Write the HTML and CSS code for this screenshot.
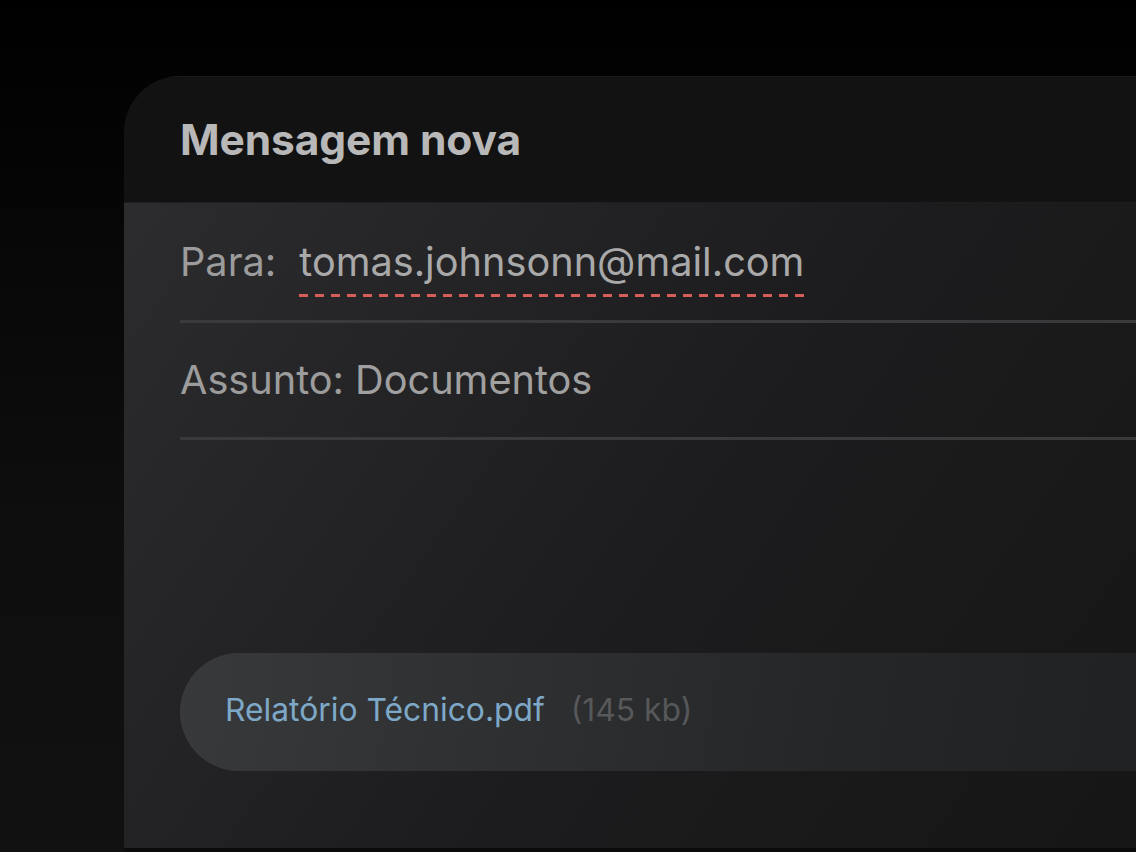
FILE: index.html
```html
<!DOCTYPE html>
<html lang="pt">
<head>
<meta charset="utf-8">
<title>Mensagem nova</title>
<link rel="stylesheet" href="styles.css">
</head>
<body>
<main class="stage">
  <section class="card">
    <header class="card-header">
      <h1 class="title">Mensagem nova</h1>
    </header>
    <div class="card-body">
      <div class="field field-to">
        <span class="label">Para:</span>
        <span class="value misspelled">tomas.johnsonn@mail.com</span>
      </div>
      <div class="field field-subject">
        <span class="label">Assunto:</span>
        <span class="value">Documentos</span>
      </div>
      <div class="spacer"></div>
      <div class="attachment">
        <span class="file-name">Relatório Técnico.pdf</span>
        <span class="file-size">(145 kb)</span>
      </div>
    </div>
  </section>
</main>
</body>
</html>
```
FILE: styles.css
```css
html, body {
  margin: 0;
  padding: 0;
  width: 1136px;
  height: 852px;
  overflow: hidden;
}
body {
  background: linear-gradient(180deg, #000 0%, #050505 20%, #0e0e0e 60%, #111 100%);
  font-family: Inter, "Noto Sans", sans-serif;
}
.stage {
  padding-top: 76px;
  padding-left: 124px;
  height: 852px;
  box-sizing: border-box;
}
.card {
  width: 1012px;
  height: 772px;
  border-top-left-radius: 56px;
  overflow: hidden;
  display: flex;
  flex-direction: column;
  box-shadow: 0 4px 0 #0b0b0b;
}
.card-header {
  height: 126px;
  flex: none;
  background: #121212;
  border-top: 1px solid #1a1a1a;
  box-sizing: border-box;
  display: flex;
  align-items: center;
  padding-left: 56px;
}
.title {
  margin: 0;
  font-size: 42.5px;
  font-weight: 700;
  color: #b8b8b8;
  letter-spacing: -0.1px;
  padding-bottom: 1px;
}
.card-body {
  flex: 1;
  background: linear-gradient(125deg, #2c2c2e 0%, #232325 30%, #1c1c1e 55%, #161616 100%);
  border-top: 1px solid #1e1e1e;
  padding-left: 56px;
  display: flex;
  flex-direction: column;
}
.field {
  display: flex;
  align-items: baseline;
  font-size: 39.7px;
  color: #9c9c9c;
  border-bottom: 3px solid #3a3a3c;
  box-sizing: border-box;
}
.field-to {
  height: 120px;
  padding-top: 35px;
  gap: 23px;
}
.field-subject {
  height: 117px;
  padding-top: 33px;
  gap: 11px;
}
.value {
  color: #a9a9a9;
}
.field-subject .value {
  color: #a0a0a0;
}
.misspelled {
  padding-bottom: 11px;
  background-image: repeating-linear-gradient(90deg, #d65e59 0 9px, transparent 9px 16px);
  background-size: 100% 3px;
  background-repeat: no-repeat;
  background-position: 0 100%;
}
.spacer {
  height: 213px;
  flex: none;
}
.attachment {
  height: 118px;
  flex: none;
  box-sizing: border-box;
  border-radius: 59px 0 0 59px;
  background: linear-gradient(100deg, #38393b 0%, #2d2e30 40%, #252628 70%, #202123 100%);
  display: flex;
  align-items: center;
  padding-left: 45px;
  padding-bottom: 6px;
  gap: 26px;
  font-size: 31.8px;
}
.file-name {
  color: #7ea8c8;
}
.file-size {
  color: #57585a;
}
```
